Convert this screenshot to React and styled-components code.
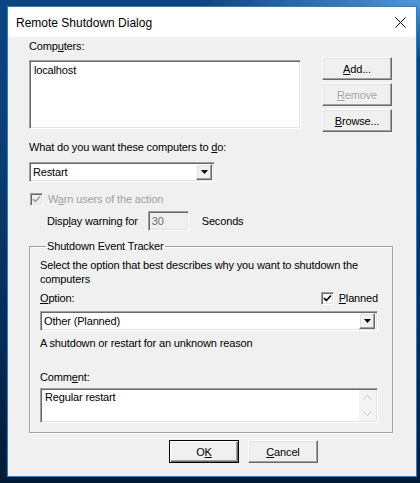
import React from 'react';
import styled, { createGlobalStyle, css } from 'styled-components';

const GlobalStyle = createGlobalStyle`
  html, body {
    margin: 0;
    padding: 0;
  }
  body {
    width: 420px;
    height: 483px;
    overflow: hidden;
    font-family: "Liberation Sans", Arial, sans-serif;
    font-size: 11px;
    letter-spacing: -0.15px;
    color: #000;
  }
`;

const sunken = css`
  border: 1px solid;
  border-color: #a0a0a0 #ffffff #ffffff #a0a0a0;
  box-shadow: inset 1px 1px 0 #696969, inset -1px -1px 0 #e3e3e3;
`;

const raised = css`
  border: 1px solid;
  border-color: #ffffff #696969 #696969 #ffffff;
  box-shadow: inset -1px -1px 0 #a0a0a0, inset 1px 1px 0 #e3e3e3;
`;

const Page = styled.div`
  width: 420px;
  height: 483px;
  box-sizing: border-box;
  padding: 6px 0 0 7px;
  background:
    radial-gradient(ellipse 220px 60px at 100% 0%, rgba(90, 165, 235, 0.85), rgba(90, 165, 235, 0) 100%),
    linear-gradient(to bottom, #0c4583 0%, #0a3c72 35%, #062b55 70%, #021a36 100%);
`;

const Window = styled.div`
  width: 410px;
  height: 471px;
  box-sizing: border-box;
  border: 1px solid #1883d7;
  background: #f0f0f0;
  display: flex;
  flex-direction: column;
`;

const TitleBar = styled.div`
  height: 30px;
  background: #ffffff;
  display: flex;
  align-items: center;
  justify-content: space-between;
  padding: 0 10px 0 8px;
  flex-shrink: 0;
`;

const Title = styled.span`
  font-size: 12px;
  letter-spacing: 0;
  color: #000;
  padding-top: 1px;
`;

const Close = styled.span`
  display: flex;
  width: 11px;
  height: 11px;
  margin-top: 1px;
`;

const Body = styled.div`
  flex: 1;
  display: flex;
  flex-direction: column;
  padding: 3px 0 0 21px;
`;

const Key = styled.span`
  text-decoration: underline;
  text-underline-offset: 1px;
`;

const Label = styled.div`
  line-height: 13px;
  height: 13px;
  margin-top: ${({ $mt }) => $mt || 0}px;
`;

const TopRow = styled.div`
  display: flex;
  align-items: flex-start;
`;

const LeftCol = styled.div`
  display: flex;
  flex-direction: column;
  gap: 7px;
`;

const ListBox = styled.div`
  ${sunken};
  width: 272px;
  height: 69px;
  box-sizing: border-box;
  background: #fff;
  padding: 3px 4px;
  line-height: 13px;
`;

const ButtonCol = styled.div`
  display: flex;
  flex-direction: column;
  gap: 3px;
  margin: 17px 0 0 21px;
`;

const Button = styled.div`
  ${raised};
  width: 70px;
  height: 23px;
  box-sizing: border-box;
  display: flex;
  align-items: center;
  justify-content: center;
  background: #f0f0f0;
  color: ${({ $disabled }) => ($disabled ? '#a0a0a0' : '#000')};
  text-shadow: ${({ $disabled }) => ($disabled ? '1px 1px 0 #fff' : 'none')};
  ${({ $default }) =>
    $default &&
    css`
      border: 1px solid #000;
      box-shadow: inset 1px 1px 0 #fff, inset -1px -1px 0 #696969, inset -2px -2px 0 #a0a0a0;
    `}
`;

const Combo = styled.div`
  ${sunken};
  width: ${({ $w }) => $w}px;
  height: 20px;
  box-sizing: border-box;
  background: #fff;
  display: flex;
  align-items: center;
  justify-content: space-between;
  padding: 0 2px 0 3px;
  margin-top: ${({ $mt }) => $mt || 0}px;
`;

const DropButton = styled.div`
  ${raised};
  width: 16px;
  height: 16px;
  box-sizing: border-box;
  background: #f0f0f0;
  display: flex;
  align-items: center;
  justify-content: center;
`;

const CheckRow = styled.div`
  display: flex;
  align-items: center;
  gap: 5px;
  height: 13px;
  line-height: 13px;
  margin-top: ${({ $mt }) => $mt || 0}px;
  margin-left: ${({ $ml }) => $ml || 0}px;
  color: ${({ $disabled }) => ($disabled ? '#a0a0a0' : '#000')};
`;

const CheckBox = styled.span`
  ${sunken};
  width: 13px;
  height: 13px;
  box-sizing: border-box;
  background: ${({ $disabled }) => ($disabled ? '#f0f0f0' : '#fff')};
  display: flex;
  align-items: center;
  justify-content: center;
`;

const WarnRow = styled.div`
  display: flex;
  align-items: center;
  height: 20px;
  margin: 5px 0 0 18px;
`;

const NumBox = styled.div`
  ${sunken};
  width: 41px;
  height: 20px;
  box-sizing: border-box;
  background: #f0f0f0;
  color: #6d6d6d;
  padding: 3px 0 0 3px;
  margin: 0 13px 0 10px;
`;

const Group = styled.fieldset`
  width: 364px;
  height: 193px;
  box-sizing: border-box;
  margin: 9px 0 0 0;
  padding: 4px 14px 0 10px;
  border: 1px solid #a0a0a0;
  box-shadow: 1px 1px 0 #fff, inset 1px 1px 0 #fff;
  display: flex;
  flex-direction: column;
`;

const Legend = styled.legend`
  padding: 0 1px;
  margin-left: 6px;
  line-height: 13px;
`;

const Para = styled.div`
  line-height: 14px;
  margin-top: ${({ $mt }) => $mt || 0}px;
`;

const OptionRow = styled.div`
  display: flex;
  align-items: center;
  justify-content: space-between;
  height: 13px;
  line-height: 13px;
  margin-top: 6px;
`;

const TextArea = styled.div`
  ${sunken};
  height: 35px;
  box-sizing: border-box;
  background: #fff;
  display: flex;
  margin-top: 4px;
`;

const TextValue = styled.div`
  flex: 1;
  padding: 2px 4px;
  line-height: 13px;
`;

const ScrollBar = styled.div`
  width: 17px;
  margin: 1px 1px 1px 0;
  background: #f4f4f4;
  display: flex;
  flex-direction: column;
  align-items: center;
  justify-content: space-between;
  padding: 5px 0;
  box-sizing: border-box;
`;

const Footer = styled.div`
  display: flex;
  gap: 9px;
  margin: 7px 0 0 140px;
`;

const Arrow = ({ up }) => (
  <svg width="9" height="5" viewBox="0 0 9 5">
    <polyline
      points={up ? '0.5,4.5 4.5,0.5 8.5,4.5' : '0.5,0.5 4.5,4.5 8.5,0.5'}
      fill="none"
      stroke="#c2c2c2"
      strokeWidth="1"
    />
  </svg>
);

const Tick = ({ color }) => (
  <svg width="9" height="9" viewBox="0 0 9 9">
    <polyline points="1,4 3.3,6.5 8,1.5" fill="none" stroke={color} strokeWidth="1.7" />
  </svg>
);

const DownTriangle = () => (
  <svg width="7" height="4" viewBox="0 0 7 4">
    <polygon points="0,0 7,0 3.5,4" fill="#000" />
  </svg>
);

export default function App() {
  return (
    <Page>
      <GlobalStyle />
      <Window>
        <TitleBar>
          <Title>Remote Shutdown Dialog</Title>
          <Close>
            <svg width="11" height="11" viewBox="0 0 11 11">
              <path d="M0.5 0.5 L10.5 10.5 M10.5 0.5 L0.5 10.5" stroke="#000" strokeWidth="1" />
            </svg>
          </Close>
        </TitleBar>
        <Body>
          <TopRow>
            <LeftCol>
              <Label>
                Comp<Key>u</Key>ters:
              </Label>
              <ListBox>localhost</ListBox>
            </LeftCol>
            <ButtonCol>
              <Button>
                <span><Key>A</Key>dd...</span>
              </Button>
              <Button $disabled>
                <span><Key>R</Key>emove</span>
              </Button>
              <Button>
                <span><Key>B</Key>rowse...</span>
              </Button>
            </ButtonCol>
          </TopRow>

          <Label $mt={9}>
            What do you want these computers to <Key>d</Key>o:
          </Label>
          <Combo $w={186} $mt={8}>
            <span>Restart</span>
            <DropButton>
              <DownTriangle />
            </DropButton>
          </Combo>

          <CheckRow $disabled $mt={11} $ml={1}>
            <CheckBox $disabled>
              <Tick color="#a0a0a0" />
            </CheckBox>
            <span>
              W<Key>a</Key>rn users of the action
            </span>
          </CheckRow>
          <WarnRow>
            <span>
              Disp<Key>l</Key>ay warning for
            </span>
            <NumBox>30</NumBox>
            <span>Seconds</span>
          </WarnRow>

          <Group>
            <Legend>Shutdown Event Tracker</Legend>
            <Para $mt={1}>
              Select the option that best describes why you want to shutdown the
              <br />
              computers
            </Para>
            <OptionRow>
              <span>
                <Key>O</Key>ption:
              </span>
              <CheckRow>
                <CheckBox>
                  <Tick color="#000" />
                </CheckBox>
                <span>
                  <Key>P</Key>lanned
                </span>
              </CheckRow>
            </OptionRow>
            <Combo $w={338} $mt={6}>
              <span>Other (Planned)</span>
              <DropButton>
                <DownTriangle />
              </DropButton>
            </Combo>
            <Para $mt={5}>A shutdown or restart for an unknown reason</Para>
            <Para $mt={20}>
              Comm<Key>e</Key>nt:
            </Para>
            <TextArea>
              <TextValue>Regular restart</TextValue>
              <ScrollBar>
                <Arrow up />
                <Arrow />
              </ScrollBar>
            </TextArea>
          </Group>

          <Footer>
            <Button $default>
              <span>
                O<Key>K</Key>
              </span>
            </Button>
            <Button>
              <span>
                <Key>C</Key>ancel
              </span>
            </Button>
          </Footer>
        </Body>
      </Window>
    </Page>
  );
}
